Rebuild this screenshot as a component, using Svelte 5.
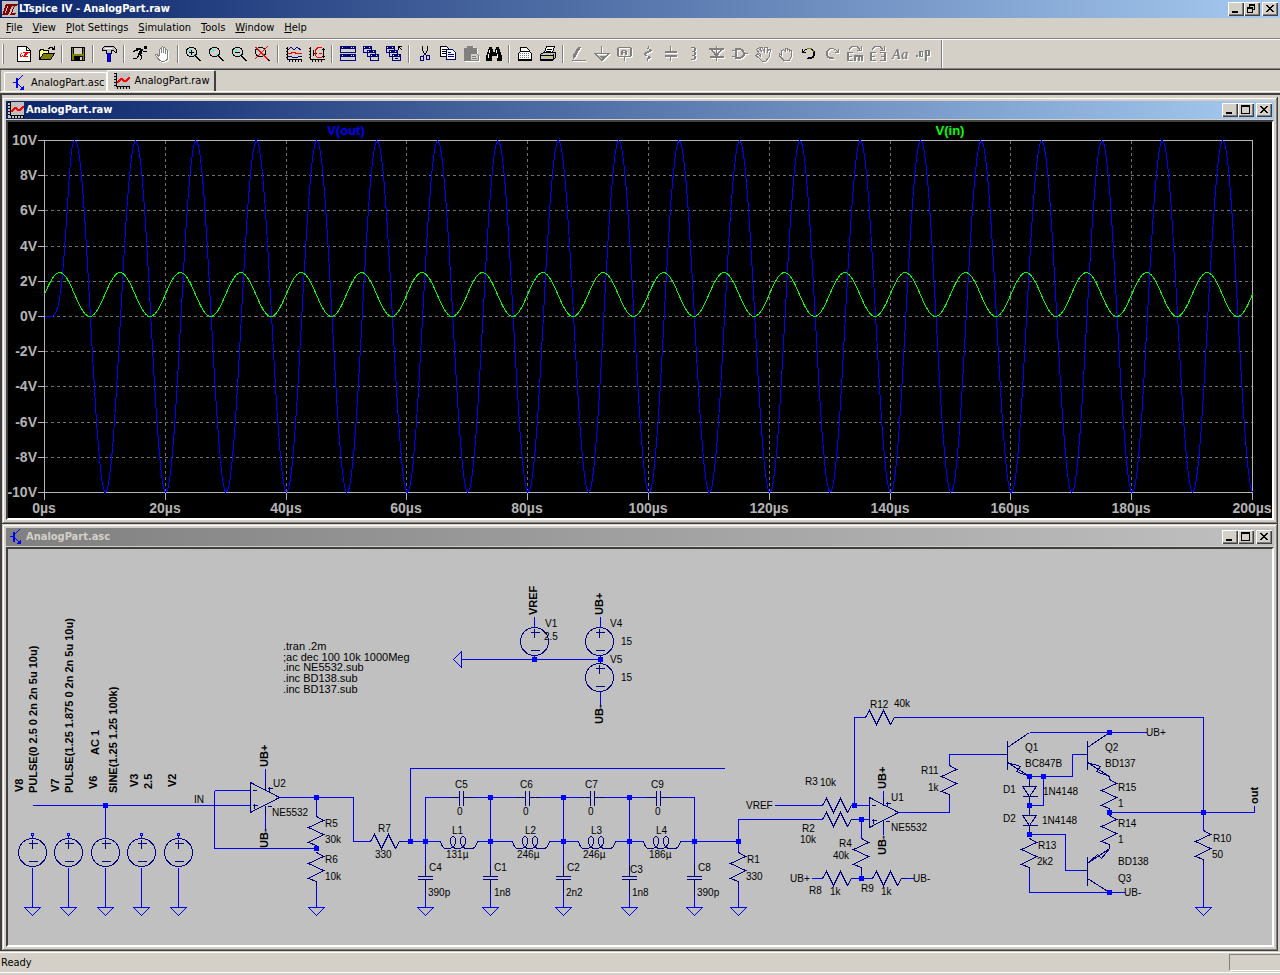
<script>
  const menus = ['File', 'View', 'Plot Settings', 'Simulation', 'Tools', 'Window', 'Help'];

  // Toolbar glyphs, each drawn on a 16 x 16 grid.
  const lens = '<path d="M3 1h5v1h2v2h1v5h-1v1h1v1h1v1h1v1h1v1h1v1h-2v-1h-1v-1h-1v-1h-1v-1h-1v-1H8v1H3V10H1V8H0V3h1V1.500h2z" fill="#000"/><path d="M3 2h5v1h1v1h1v4H9v1H8v1H3V9H2V8H1V4h1V3h1z" fill="#d4d0c8"/><path d="M3 4h1v-1h1M2 5h1M8 8h1M7 9h1" stroke="#0ff" fill="none"/>';
  const win = (x, y) => `<rect x="${x}" y="${y}" width="9" height="7" fill="#000080"/><rect x="${x + 1}" y="${y + 3}" width="7" height="3" fill="#d4d0c8"/><path d="M${x + 1} ${y + 1}.5h1M${x + 6} ${y + 1}.5h1" stroke="#fff"/>`;
  const logo = '<path d="M6 3h10l-1 2h-2l-3 7h4l-1 2H8l4-9h-2l-4 9H0l1-2 3-9h2l-3 9h1l2-7h-1z" fill="#800000"/>';
  const plotIcon = '<rect width="16" height="16" fill="#c0c0c0"/><path d="M2.500 0v13.500H16M0 .5h2M0 3.500h2M0 6.500h2M0 9.500h2M0 12.500h2M3.500 13v3M6.500 13v3M9.500 13v3M12.500 13v3M15.500 13v3" stroke="#000" fill="none"/><path d="M3 8h1V7h1V6h1V5h3v1h1v1h2V6h1V5h1V4h2v2h-1v1h-1v1h-1v1H9V8H8V7H7v1H6v1H5v1H3z" fill="#f00"/>';
  const bjtIcon = '<path d="M2 7.500h4M12 0l-5 5M7 9l5 5" stroke="#00f" fill="none"/><path d="M5 3h2v10H5zM13 15v-5l-5 5z" fill="#00f"/>';

  const icons = {
    'New schematic': '<path d="M1.500.5h9l4 4v11h-13z" fill="#fff" stroke="#000"/><path d="M10.500.5v4h4" fill="none" stroke="#000"/><path d="M7 6h7l-1 1h-1l-2 3h2l-1 1H7l2-4H8l-2 4H3l1-1 1-3h1l-1 3h1l2-3H6z" fill="#f00"/>',
    'Open': '<path d="M0.500 13.500v-9h1v-1h3v1h5v3" fill="#ff8" stroke="#000"/><path d="M.5 13.500l4-6h11l-4 6z" fill="#808000" stroke="#000"/><path d="M9 2.500h1v-1h3v1h1v1h1M15.500 0v4M13 3.500h2" fill="none" stroke="#000"/>',
    'Save': '<rect x="1.500" y="1.500" width="13" height="13" fill="#808000" stroke="#000"/><rect x="4" y="2" width="8" height="6" fill="#d4d0c8"/><rect x="4" y="10" width="9" height="5" fill="#000"/><rect x="10" y="11" width="2" height="3" fill="#d4d0c8"/><path d="M3.500 2v6M12.500 2v6" stroke="#000"/>',
    'Control panel': '<path d="M1 3.500L3.500.5h9l3 3v3h-1l-2-2h-2v3h-5V4.500H1z" fill="#c0c0c0" stroke="#000"/><path d="M4 2h7" stroke="#fff"/><rect x="6" y="7" width="4" height="9" fill="#000080"/><rect x="7" y="7" width="2" height="9" fill="#00f"/>',
    'Run': '<path d="M12 0h3v3h-3zM4 2h5v1h2v2H9V4H6v1H4zM8 4h3l-1 3-1 2H6l1-3z" fill="#000"/><path d="M7 8l3 2-1 3-1 1M7 9l-2 3H1M11 5l2 1 2-1M4 4L1 6" stroke="#000" fill="none"/>',
    'Halt': '<path d="M4.500 9V3.500q1-1.500 2 0V7V1.500q1-1.500 2 0V7V2.500q1-1.500 2 0V8V4.500q1-1.500 2 0V11q0 4-3 4h-3q-2 0-3-2l-3-4q1-1.500 3 1z" fill="#fff" stroke="#808080"/>',
    'Zoom in': lens + '<path d="M3 6.500h5M5.500 4v5" stroke="#000"/>',
    'Pan': lens,
    'Zoom back': lens + '<path d="M3 6.500h5" stroke="#000"/>',
    'Zoom full extents': lens + '<path d="M0 1l13 13M13 0L0 13M1 1l12 12" stroke="#f00"/>',
    'Autorange': '<path d="M1.500 1v12.500H16M0 2.500h1M0 5.500h1M0 8.500h1M0 11.500h1M3.500 14v2M6.500 14v2M9.500 14v2M12.500 14v2M15.500 14v2" stroke="#000" fill="none"/><path d="M2 4l3-3 3 3 3-3 4 3" stroke="#000080" fill="none"/><path d="M2 7.500h3l1-1h3l1 1h6" stroke="#f00" fill="none"/><path d="M2 10.500h3l2 1h4l2-1h3" stroke="#000080" fill="none"/>',
    'Plot settings': '<path d="M1.500 1v12.500H16M0 2.500h1M0 5.500h1M0 8.500h1M0 11.500h1M3.500 14v2M6.500 14v2M9.500 14v2M12.500 14v2M4.500 4v6M14.500 2v10M13 3.500h3M13 10.500h3M4 7.500h4" stroke="#000" fill="none"/><path d="M13 1.500H9l-3 3v5l3 2h4M10 7.500h3" stroke="#f00" fill="none"/>',
    'Tile': '<rect width="16" height="7" y="0" fill="#000080"/><rect y="8" width="16" height="7" fill="#000080"/><path d="M1 3h14v3H1zM1 11h14v3H1z" fill="#d4d0c8"/><path d="M2 1.500h1M11 1.500h1M13 1.500h1M2 9.500h1M11 9.500h1M13 9.500h1" stroke="#fff"/>',
    'Cascade': win(0, 0) + win(4, 4) + win(7, 8),
    'Close all': win(0, 0) + win(3, 4) + win(6, 8) + '<path d="M11 0h5v2h-5z" fill="#d4d0c8"/><path d="M12 .5h4M12.500 0v4M13 1l3 3" stroke="#000" fill="none"/><path d="M9 12.500h3" stroke="#000080"/>',
    'Cut': '<path d="M5.500 0v4l2 4M10.500 0v4l-2 4" stroke="#000" fill="none"/><path d="M8 8l-2 2M8 8l2 2" stroke="#000080"/><rect x="3.500" y="10.500" width="3" height="4" rx="1" fill="none" stroke="#000080"/><rect x="9.500" y="9.500" width="3" height="4" rx="1" fill="none" stroke="#000080"/>',
    'Copy': '<path d="M.5.5h6l2 2v8h-8z" fill="#fff" stroke="#000"/><path d="M2 3.500h4M2 5.500h4M2 7.500h4" stroke="#000"/><path d="M6.500 3.500h6l3 3v7h-9z" fill="#fff" stroke="#000080"/><path d="M8 6.500h3M8 8.500h6M8 10.500h6" stroke="#000080"/>',
    'Paste': '<path d="M1 2h3V0h6v2h4v5H7v8H1z" fill="#808080"/><path d="M7.500 7.500h6l2 2v5h-8z" fill="#d4d0c8" stroke="#808080"/><path d="M9 10.500h4M9 12.500h5" stroke="#808080"/>',
    'Find': '<path d="M3 1h3v2h1v3h2V3h1V1h3v2h1v3h1v3h1v6h-5v-5H6v5H0V9h1V6h1V3h1z" fill="#000"/><path d="M3.500 4v3M2.500 8v4M10.500 4v3M11.500 8v4" stroke="#fff"/>',
    'Print setup': '<path d="M3.500 6V1.500h6l3 3V6" fill="#fff" stroke="#000"/><path d="M3.500 5.500h9l2 2v7h-13v-7z" fill="#fff" stroke="#000"/><path d="M3 7.500h10M3 9.500h10M3 11.500h10" stroke="#808080" stroke-dasharray="1 1"/><path d="M1 14h14" stroke="#000" stroke-width="2"/>',
    'Print': '<path d="M4.500 7l2-6.500h8l-2 6.500" fill="#fff" stroke="#000"/><path d="M7 3.500h5M6 5.500h5" stroke="#000"/><path d="M.5 8.500l3-2h12v5l-3 3H.5z" fill="#c0c0c0" stroke="#000"/><path d="M1 9.500h12M1 13.500h12M13.500 8v6" stroke="#000"/><path d="M7 11.500h4" stroke="#dd0"/>',
    'Wire': '<path d="M7 1h3l-5 9-3 3V9z" fill="#808080"/><path d="M1 14.500h14" stroke="#808080"/>',
    'Ground': '<path d="M7.500 0v8M0 7.500h15l-7 7-7-7" stroke="#808080" fill="none"/><path d="M5 10h6l-3 3z" fill="#808080"/>',
    'Label net': '<path d="M1 1h13v1H1zM0 2h2v8H0zM13 2h2v8h-2zM1 10h13v1H1zM7 11h1v4H7zM5 4h4v1H5zM4 5h2v4H4zM8 5h2v4H8zM6 6h2v1H6z" fill="#808080"/>',
    'Resistor': '<path d="M8 0h1v2H8zM7 2h1l4 2v1L6 8v1l5 2v1l-3 1v2H7v-3l2-1-5-2V7l6-3-3-1z" fill="#808080"/>',
    'Capacitor': '<path d="M7.500 0v5M7.500 10v5" stroke="#808080"/><path d="M2 6h12M2 10h12" stroke="#808080" stroke-width="2"/>',
    'Inductor': '<path d="M5 1h4v1h1v3H9v1h1v3H9v1h1v3H9v1H5v-1h3v-3H6V9h2V6H6V5h2V2H5z" fill="#808080"/>',
    'Diode': '<path d="M7 0h1v15H7zM0 2h15v2H0zM1 10h14v2H1z" fill="#808080"/><path d="M2 4l5.500 6L13 4M3 4l4.500 5L12 4" stroke="#808080" fill="none"/>',
    'Component': '<path d="M3 2h6v1h2v1h1v2h1v1h3v1h-3v2h-1v1h-1v1H9v1H3v-2H0v-1h3V5H0V4h3zM5 4v7h4v-1h1V9h1V6h-1V5H9V4z" fill="#808080" fill-rule="evenodd"/>',
    'Move': '<path d="M5 8L1.500 3.500 3 2l4 4L5 1.500 7 1l2.500 5L10 1.500h2V7l2-4 1.500 1L14 11l-3 4H7L1 9.500 2.500 8 5 10z" stroke="#808080" fill="none"/>',
    'Drag': '<path d="M3.500 9V5l2-1.500L7 5V2.500h2V5V3h2v2.500l1-1.500 1.500 1V10L11 14.500H6L1.500 10V8l2 1z" stroke="#808080" fill="none"/>',
    'Undo': '<path d="M1 3h1v2h1v1h2v1H1zM3 4h1V3h2V2h5v1h1v1h1v1h1v5h-1v2h-2v1H6v-1h1v-1h4v-1h1V5h-1V4h-1V3H6v1H4v1H3z" fill="#000"/><path d="M6 2.500h5M12.500 4v2" stroke="#808000" fill="none"/>',
    'Redo': '<path d="M15 3h-1v2h-1v1h-2v1h4zM13 4h-1V3h-2V2H5v1H4v1H3v1H2v5h1v2h2v1h5v-1H9v-1H5v-1H4V5h1V4h1V3h4v1h2v1h1z" fill="#808080"/>',
    'Rotate': '<path d="M0 6h6v1H2v3h3v1H2v3h4v1H0zM7 9h9v6h-2v-4h-1v4h-2v-4H9v4H7z" fill="#808080"/><path d="M2 3.500l3-3h5l3 3M14 0v4h-4" stroke="#808080" fill="none"/>',
    'Mirror': '<path d="M0 6h6v1H2v3h3v1H2v3h4v1H0zM10 6h6v9h-6v-1h4v-3h-3v-1h3V7h-4z" fill="#808080"/><path d="M2 3.500l3-3h5l3 3M14 0v4h-4" stroke="#808080" fill="none"/>',
    'Text': '<text x="-1" y="13" font-family="Liberation Serif, serif" font-style="italic" font-weight="bold" font-size="14" fill="#808080">Aa</text>',
    'SPICE directive': '<path d="M0 9h2v2H0zM3 5h4v6H3zM5 6v4h1V6zM9 4h5v6h-3v5H9zM11 5v4h1V5z" fill="#808080" fill-rule="evenodd"/>',
  };

  const groups = [
    ['New schematic', 'Open'],
    ['Save'],
    ['Control panel'],
    ['Run', 'Halt'],
    ['Zoom in', 'Pan', 'Zoom back', 'Zoom full extents'],
    ['Autorange', 'Plot settings'],
    ['Tile', 'Cascade', 'Close all'],
    ['Cut', 'Copy', 'Paste', 'Find'],
    ['Print setup', 'Print'],
    ['Wire', 'Ground', 'Label net', 'Resistor', 'Capacitor', 'Inductor', 'Diode', 'Component', 'Move', 'Drag', 'Undo', 'Redo', 'Rotate', 'Mirror', 'Text', 'SPICE directive'],
  ];
  const disabled = new Set(['Halt', 'Paste', ...groups[9].filter((n) => n !== 'Undo')]);

  // Waveform plot: 0..200 µs across, -10..10 V up.
  const px = (t) => 44 + t * 6.04;
  const py = (v) => 316 - v * 17.6;
  const times = Array.from({ length: 11 }, (_, i) => i * 20);
  const volts = Array.from({ length: 11 }, (_, i) => 10 - i * 2);
  const steps = Array.from({ length: 801 }, (_, i) => i / 4);
  const line = (pts) => 'M' + pts.map(([x, y]) => x.toFixed(1) + ' ' + y.toFixed(1)).join('L');
  const vin = line(steps.map((t) => [px(t), py(1.25 + 1.25 * Math.sin((Math.PI * t) / 5))]));
  const vout = line([
    [44, 316], [52, 316], [55, 313], [58, 305], [61, 284], [63, 262], [65, 235], [67, 205], [69, 173], [71, 150], [73, 141],
    ...steps.filter((t) => t >= 5).map((t) => [px(t), py(-10 * Math.cos((Math.PI * (t - 0.1)) / 5))]),
  ]);

  // Schematic symbols.
  const resV = (x, y) => `M${x} ${y}l7 4l-15 7l15 7l-15 8l8 3v4`;
  const resH = (x, y) => `M${x} ${y}l4 -7l7 14l7 -14l7 14l4 -7h4`;
  const capV = (x) => `M${x} 864V876M${x - 8} 876h15M${x - 8} 879h15M${x} 879V892`;
  const capH = (x) => `M${x - 13} 797H${x - 2}M${x - 2} 790v15M${x + 2} 790v15M${x + 2} 797H${x + 13}`;
  const coil = (x) => `M${x} 841c1 5 3 7 6 7h2c5 0 7 -4 7 -8c0 -5 -5 -5 -5 0c0 5 2 8 7 8c6 0 8 -4 8 -8c0 -5 -5 -5 -5 0c0 5 2 8 7 8h4c3 0 5 -3 6 -7`;
  const source = (x, y) => `M${x - 14} ${y}a14 14 0 1 0 28 0a14 14 0 1 0 -28 0M${x - 4} ${y - 9}h9M${x} ${y - 13}v9M${x - 4} ${y + 9}h9`;
  const opamp = (x, y, s) => `M${x} ${y - 15}l29 15l-29 15zM${x + 2} ${y - 7}h4M${x + 2} ${y + 8}h5M${x + 4} ${y + 6}v5M${s + 2} ${y - 9}h5M${s + 4} ${y - 11}v5M${s + 2} ${y + 9}h4M${s} ${y - 15}v8M${s} ${y + 8}v8`;
  const diode = (x, y) => `M${x} ${y - 10}v10M${x - 7} ${y}h14l-7 10zM${x - 7} ${y + 10}h15M${x} ${y + 10}v9`;
  const ground = (x) => `M${x - 8} 907h16l-8 8z`;
  const npn = (x, y) => `M${x - 7} ${y}h7M${x} ${y - 14}v29M${x} ${y - 7}l22 -15M${x} ${y + 8}l22 14l-13 -5l4 -5z`;

  const parts = [
    ...[32, 68, 105, 141, 178].map((x) => source(x, 852)),
    source(534, 641), source(599, 641), source(599, 677),
    opamp(250, 797, 265), opamp(869, 812, 883),
    resV(316, 816), resV(316, 852), resV(738, 852), resV(861, 838), resV(949, 765),
    resV(1109, 779), resV(1109, 815), resV(1029, 838), resV(1203, 830),
    resH(370, 841), resH(822, 805), resH(822, 819), resH(822, 878), resH(872, 878), resH(865, 717),
    ...[461, 527, 592, 658].map(capH),
    ...[425, 490, 563, 629, 694].map(capV),
    ...[440, 512, 578, 643].map(coil),
    diode(1029, 786), diode(1029, 815),
    npn(1007, 754), npn(1087, 754),
    'M1080 870h7M1087 856v29M1109 848L1087 863l10 -9l4 4zM1087 878l22 14M534 655v4M600 655v8',
  ].join('');

  const wires = [
    'M32 805H250M105 805V838M214 790H250M214 790V848H316M265 768V782M265 813V829M279 797H353V841H370M316 797V816M316 885V907',
    'M403 841H440M410 841V768H724M425 841V797H448M474 797H514M540 797H579M605 797H645M671 797H694V841',
    'M490 797V864M563 797V864M629 797V864M425 841V864M694 841V864M477 841H512M549 841H578M615 841H643M680 841H738M738 852V819H822',
    'M738 885V907M425 892V907M490 892V907M563 892V907M629 892V907M694 892V907',
    'M774 805H822M854 805H869M854 805V717H865M898 717H1203V830M1203 863V907M854 819H869M861 819V838M861 871V878M811 878H822M855 878H872M905 878H913',
    'M883 790V797M883 827V834M898 812H949V798M949 765V754H1000M1029 732H1146M1029 776H1072V754H1080M1043 776V805H1029M1029 834H1065V870H1080M1029 871V892H1124',
    'M1109 776v3M1109 812H1254V805M461 659H600M534 616V627M600 616V627M600 691V704',
    'M461 651v16l-8 -8z',
    ...[32, 68, 105, 141, 178].map((x) => `M${x} 867V907`),
    ...[32, 68, 105, 141, 178, 316, 425, 490, 563, 629, 694, 738, 1203].map(ground),
  ].join('');

  const nodes = [
    [105, 805], [316, 797], [316, 848], [410, 841], [425, 841], [490, 841], [563, 841], [629, 841], [694, 841], [738, 841],
    [490, 797], [563, 797], [629, 797], [534, 659], [600, 659], [854, 805], [861, 819], [861, 878], [1029, 776], [1043, 776],
    [1029, 805], [1029, 834], [1109, 732], [1109, 812], [1109, 892], [1203, 812],
  ];

  const labels = [
    [194, 803, 'IN'], [273, 787, 'U2'], [272, 816, 'NE5532'], [325, 827, 'R5'], [325, 843, '30k'], [325, 863, 'R6'], [325, 880, '10k'],
    [378, 832, 'R7'], [375, 858, '330'], [455, 788, 'C5'], [457, 815, '0'], [520, 788, 'C6'], [523, 815, '0'], [585, 788, 'C7'], [588, 815, '0'],
    [651, 788, 'C9'], [655, 815, '0'], [452, 834, 'L1'], [525, 834, 'L2'], [591, 834, 'L3'], [656, 834, 'L4'],
    [446, 858, '131µ'], [517, 858, '246µ'], [583, 858, '246µ'], [649, 858, '186µ'],
    [429, 871, 'C4'], [494, 871, 'C1'], [567, 871, 'C2'], [630, 873, 'C3'], [698, 871, 'C8'],
    [428, 896, '390p'], [494, 896, '1n8'], [566, 896, '2n2'], [632, 896, '1n8'], [697, 896, '390p'],
    [545, 627, 'V1'], [544, 640, '2.5'], [610, 627, 'V4'], [621, 645, '15'], [610, 663, 'V5'], [621, 681, '15'],
    [870, 708, 'R12'], [894, 707, '40k'], [805, 785, 'R3'], [820, 786, '10k'], [746, 809, 'VREF'], [802, 832, 'R2'], [800, 843, '10k'],
    [839, 847, 'R4'], [833, 859, '40k'], [790, 882, 'UB+'], [809, 894, 'R8'], [830, 895, '1k'], [861, 892, 'R9'], [881, 895, '1k'], [913, 882, 'UB-'],
    [891, 801, 'U1'], [891, 831, 'NE5532'], [921, 774, 'R11'], [928, 791, '1k'], [747, 863, 'R1'], [746, 880, '330'],
    [1025, 751, 'Q1'], [1025, 767, 'BC847B'], [1105, 751, 'Q2'], [1105, 767, 'BD137'], [1146, 736, 'UB+'], [1118, 791, 'R15'], [1118, 807, '1'],
    [1118, 827, 'R14'], [1118, 843, '1'], [1118, 865, 'BD138'], [1118, 882, 'Q3'], [1124, 896, 'UB-'], [1003, 793, 'D1'], [1043, 795, '1N4148'],
    [1003, 822, 'D2'], [1042, 824, '1N4148'], [1038, 849, 'R13'], [1037, 865, '2k2'], [1213, 842, 'R10'], [1212, 858, '50'],
  ];

  const vertical = [
    [23, 792, 'V8'], [37, 793, 'PULSE(0 2.5 0 2n 2n 5u 10u)'], [59, 792, 'V7'], [73, 793, 'PULSE(1.25 1.875 0 2n 2n 5u 10u)'],
    [97, 789, 'V6'], [99, 755, 'AC 1'], [117, 793, 'SINE(1.25 1.25 100k)'], [138, 787, 'V3'], [152, 789, '2.5'], [176, 787, 'V2'],
    [268, 767, 'UB+'], [268, 848, 'UB-'], [537, 615, 'VREF'], [603, 615, 'UB+'], [603, 724, 'UB-'], [886, 789, 'UB+'], [886, 855, 'UB-'], [1258, 804, 'out'],
  ];

  const directives = [[650, '.tran .2m'], [661, ';ac dec 100 10k 1000Meg'], [671, '.inc NE5532.sub'], [682, '.inc BD138.sub'], [693, '.inc BD137.sub']];
</script>

{#snippet icon(body)}
  <svg class="icon" viewBox="0 0 16 16" aria-hidden="true">{@html body}</svg>
{/snippet}

{#snippet controls(restore)}
  <div class="controls">
    <button aria-label="Minimize"><svg viewBox="0 0 12 10"><path d="M2 7h6v2H2z" /></svg></button>
    {#if restore}
      <button aria-label="Restore"><svg viewBox="0 0 12 10"><path d="M3 0h6v6H7V5h1V2H4v1H3zM1 3h6v6H1zM2 5v3h4V5z" fill-rule="evenodd" /></svg></button>
    {:else}
      <button aria-label="Maximize"><svg viewBox="0 0 12 10"><path d="M1 0h9v9H1zM2 2v6h7V2z" fill-rule="evenodd" /></svg></button>
    {/if}
    <button class="close" aria-label="Close"><svg viewBox="0 0 12 10"><path d="M2 1h2v1h1v1h2V2h1V1h2v1H9v1H8v1H7v1h1v1h1v1h1v1H8V7H7V6H5v1H4v1H2V7h1V6h1V5h1V4H4V3H3V2H2z" /></svg></button>
  </div>
{/snippet}

<div class="app">
  <header class="titlebar main">
    <span class="badge">{@render icon(logo)}</span>
    <h1>LTspice IV - AnalogPart.raw</h1>
    {@render controls(true)}
  </header>

  <nav class="menubar">
    {#each menus as m}
      <button><u>{m[0]}</u>{m.slice(1)}</button>
    {/each}
  </nav>

  <div class="toolbar" role="toolbar" aria-label="Standard">
    <div class="grip"></div>
    {#each groups as g, i}
      {#if i}<div class="sep"></div>{/if}
      {#each g as name}
        <button aria-label={name} class:off={disabled.has(name)}>{@render icon(icons[name])}</button>
      {/each}
    {/each}
    <div class="end"></div>
  </div>

  <div class="tabs" role="tablist">
    <button role="tab" aria-selected="false">{@render icon(bjtIcon)}<span>AnalogPart.asc</span></button>
    <button role="tab" aria-selected="true" class="selected">{@render icon(plotIcon)}<span>AnalogPart.raw</span></button>
  </div>

  <main>
    <section class="window">
      <header class="titlebar">
        {@render icon(plotIcon)}
        <h2>AnalogPart.raw</h2>
        {@render controls(false)}
      </header>
      <div class="client plot">
        <svg viewBox="8 122 1264 396">
          <g transform="translate(0.5 0.5)" class="lines">
            {#each volts as v}
              <path class="axis" d="M37 {Math.round(py(v))}H44" />
              {#if Math.abs(v) < 10}<path class="grid" d="M44 {Math.round(py(v))}H1252" />{/if}
            {/each}
            {#each times as t}
              <path class="axis" d="M{Math.round(px(t))} 492V499" />
              {#if t > 0 && t < 200}<path class="grid" d="M{Math.round(px(t))} 140V492" />{/if}
            {/each}
            <path class="axis" d="M44 140H1252V492H44z" />
            <path d={vout} stroke="#0000ff" />
            <path d={vin} stroke="#00ff00" />
          </g>
          <g class="scale">
            {#each volts as v}<text x="37" y={Math.round(py(v)) + 5} text-anchor="end">{v}V</text>{/each}
            {#each times as t}<text x={Math.round(px(t))} y="513" text-anchor="middle">{t}µs</text>{/each}
          </g>
          <g class="traces">
            <text x="346" y="135" fill="#0000ff" text-anchor="middle">V(out)</text>
            <text x="950" y="135" fill="#00ff00" text-anchor="middle">V(in)</text>
          </g>
        </svg>
      </div>
    </section>

    <section class="window">
      <header class="titlebar inactive">
        {@render icon(bjtIcon)}
        <h2>AnalogPart.asc</h2>
        {@render controls(false)}
      </header>
      <div class="client sheet">
        <svg viewBox="8 549 1264 396">
          <g class="vertical">
            {#each vertical as [x, y, t]}<text transform="translate({x} {y}) rotate(-90)">{t}</text>{/each}
          </g>
          <g transform="translate(0.5 0.5)" class="lines">
            <path d={parts} stroke="#000080" />
            <path d={wires} stroke="#0000ff" />
            {#each [32, 68, 141, 178] as x}<path d="M{x - 1} 833h2v2h-2zM{x} 835v3" stroke="#0000ff" />{/each}
          </g>
          {#each nodes as [x, y]}<rect x={x - 2} y={y - 2} width="5" height="5" fill="#0000ff" />{/each}
          <g class="labels">
            {#each labels as [x, y, t]}<text {x} {y}>{t}</text>{/each}
          </g>
          <g class="directives">
            {#each directives as [y, t]}<text x="283" {y}>{t}</text>{/each}
          </g>
        </svg>
      </div>
    </section>
  </main>

  <footer class="status">
    <span>Ready</span>
    <div class="cell"></div>
  </footer>
</div>

<style>
  :global(body) {
    background: #d4d0c8;
  }
  .app {
    font: 11px/14px "DejaVu Sans Condensed", "DejaVu Sans", sans-serif;
    color: #000;
  }
  button {
    font: inherit;
    color: inherit;
    background: none;
    border: 0;
    padding: 0;
    margin: 0;
  }
  h1,
  h2 {
    font: inherit;
    font-weight: bold;
    margin: 0;
    flex: 1;
    white-space: nowrap;
  }
  svg {
    display: block;
  }
  .icon {
    width: 16px;
    height: 16px;
    flex: none;
    overflow: visible;
    shape-rendering: crispEdges;
  }

  .titlebar {
    display: flex;
    align-items: center;
    gap: 2px;
    height: 18px;
    padding: 0 2px;
    color: #fff;
    background: linear-gradient(90deg, #0a246a, #a6caf0);
  }
  .titlebar.main {
    gap: 1px;
  }
  .titlebar.inactive {
    color: #d4d0c8;
    background: linear-gradient(90deg, #808080, #c0c0c0);
  }
  .badge {
    background: #c0c0c0;
  }
  .controls {
    display: flex;
    color: #000;
  }
  .controls button {
    width: 16px;
    height: 14px;
    padding: 1px;
    background: #d4d0c8;
    box-shadow: inset 1px 1px #fff, inset -1px -1px #404040, inset -2px -2px #808080;
  }
  .controls svg {
    width: 12px;
    height: 10px;
    margin: 1px;
    shape-rendering: crispEdges;
  }
  .controls .close {
    margin-left: 2px;
  }

  .menubar {
    display: flex;
    height: 20px;
    align-items: center;
    padding-left: 1px;
    border-bottom: 1px solid #808080;
  }
  .menubar button {
    padding: 0 5px;
  }
  .toolbar {
    display: flex;
    align-items: center;
    height: 28px;
    border-top: 1px solid #fff;
    border-bottom: 1px solid #808080;
    box-shadow: 0 1px #404040;
    margin-bottom: 1px;
  }
  .toolbar button {
    width: 23px;
    height: 22px;
    padding: 3px 4px;
  }
  .off .icon {
    filter: drop-shadow(1px 1px 0 #fff);
  }
  .grip {
    width: 1px;
    height: 20px;
    margin: 0 8px 0 2px;
    border-right: 1px solid #808080;
    background: #fff;
  }
  .sep {
    width: 1px;
    height: 18px;
    margin: 0 3px;
    background: #808080;
    border-right: 1px solid #fff;
  }
  .end {
    align-self: stretch;
    width: 1px;
    margin-left: 6px;
    background: #808080;
    border-right: 1px solid #fff;
  }

  .tabs {
    display: flex;
    align-items: flex-end;
    height: 21px;
    padding-left: 3px;
    margin-bottom: 1px;
    border-left: 1px solid #808080;
    border-bottom: 1px solid #fff;
  }
  .tabs button {
    display: flex;
    align-items: center;
    gap: 4px;
    height: 19px;
    padding: 2px 2px 0 6px;
    border-left: 1px solid #fff;
    border-top: 1px solid #fff;
    border-right: 1px solid #fff;
    border-radius: 2px 2px 0 0;
  }
  .tabs .selected {
    height: 21px;
    padding: 0 4px 1px 6px;
    border-right: 2px solid #404040;
  }

  main {
    border: solid;
    border-width: 2px 0 0 2px;
    border-color: #404040;
    padding: 2px 2px 0 0;
  }
  .window {
    padding: 4px;
    box-shadow: inset -1px -1px #404040, inset 1px 1px #d4d0c8, inset -2px -2px #808080, inset 2px 2px #fff;
  }
  .client {
    margin-top: 1px;
    border: 2px solid;
    border-color: #404040 #fff #fff #404040;
  }
  .client svg {
    width: 100%;
    height: auto;
  }
  .plot {
    background: #000;
  }
  .sheet {
    background: #c0c0c0;
  }
  .lines {
    fill: none;
    shape-rendering: crispEdges;
  }
  .axis {
    stroke: #b4b4b4;
  }
  .grid {
    stroke: #707070;
    stroke-dasharray: 3 3;
  }
  .client text {
    font-family: "Liberation Sans", Arial, sans-serif;
  }
  .scale {
    font-size: 14px;
    font-weight: bold;
    fill: #b4b4b4;
  }
  .traces {
    font-size: 13px;
    font-weight: bold;
  }
  .labels {
    font-size: 10px;
  }
  .directives {
    font-size: 11px;
  }
  .vertical {
    font-size: 11px;
    font-weight: bold;
  }

  .status {
    display: flex;
    justify-content: space-between;
    align-items: center;
    height: 19px;
    margin-top: 1px;
    padding-left: 1px;
    border-top: 1px solid #fff;
    border-bottom: 1px solid #fff;
  }
  .cell {
    width: 50px;
    height: 15px;
    border: solid;
    border-width: 1px 0 1px 1px;
    border-color: #808080 #fff #fff #808080;
  }
</style>
